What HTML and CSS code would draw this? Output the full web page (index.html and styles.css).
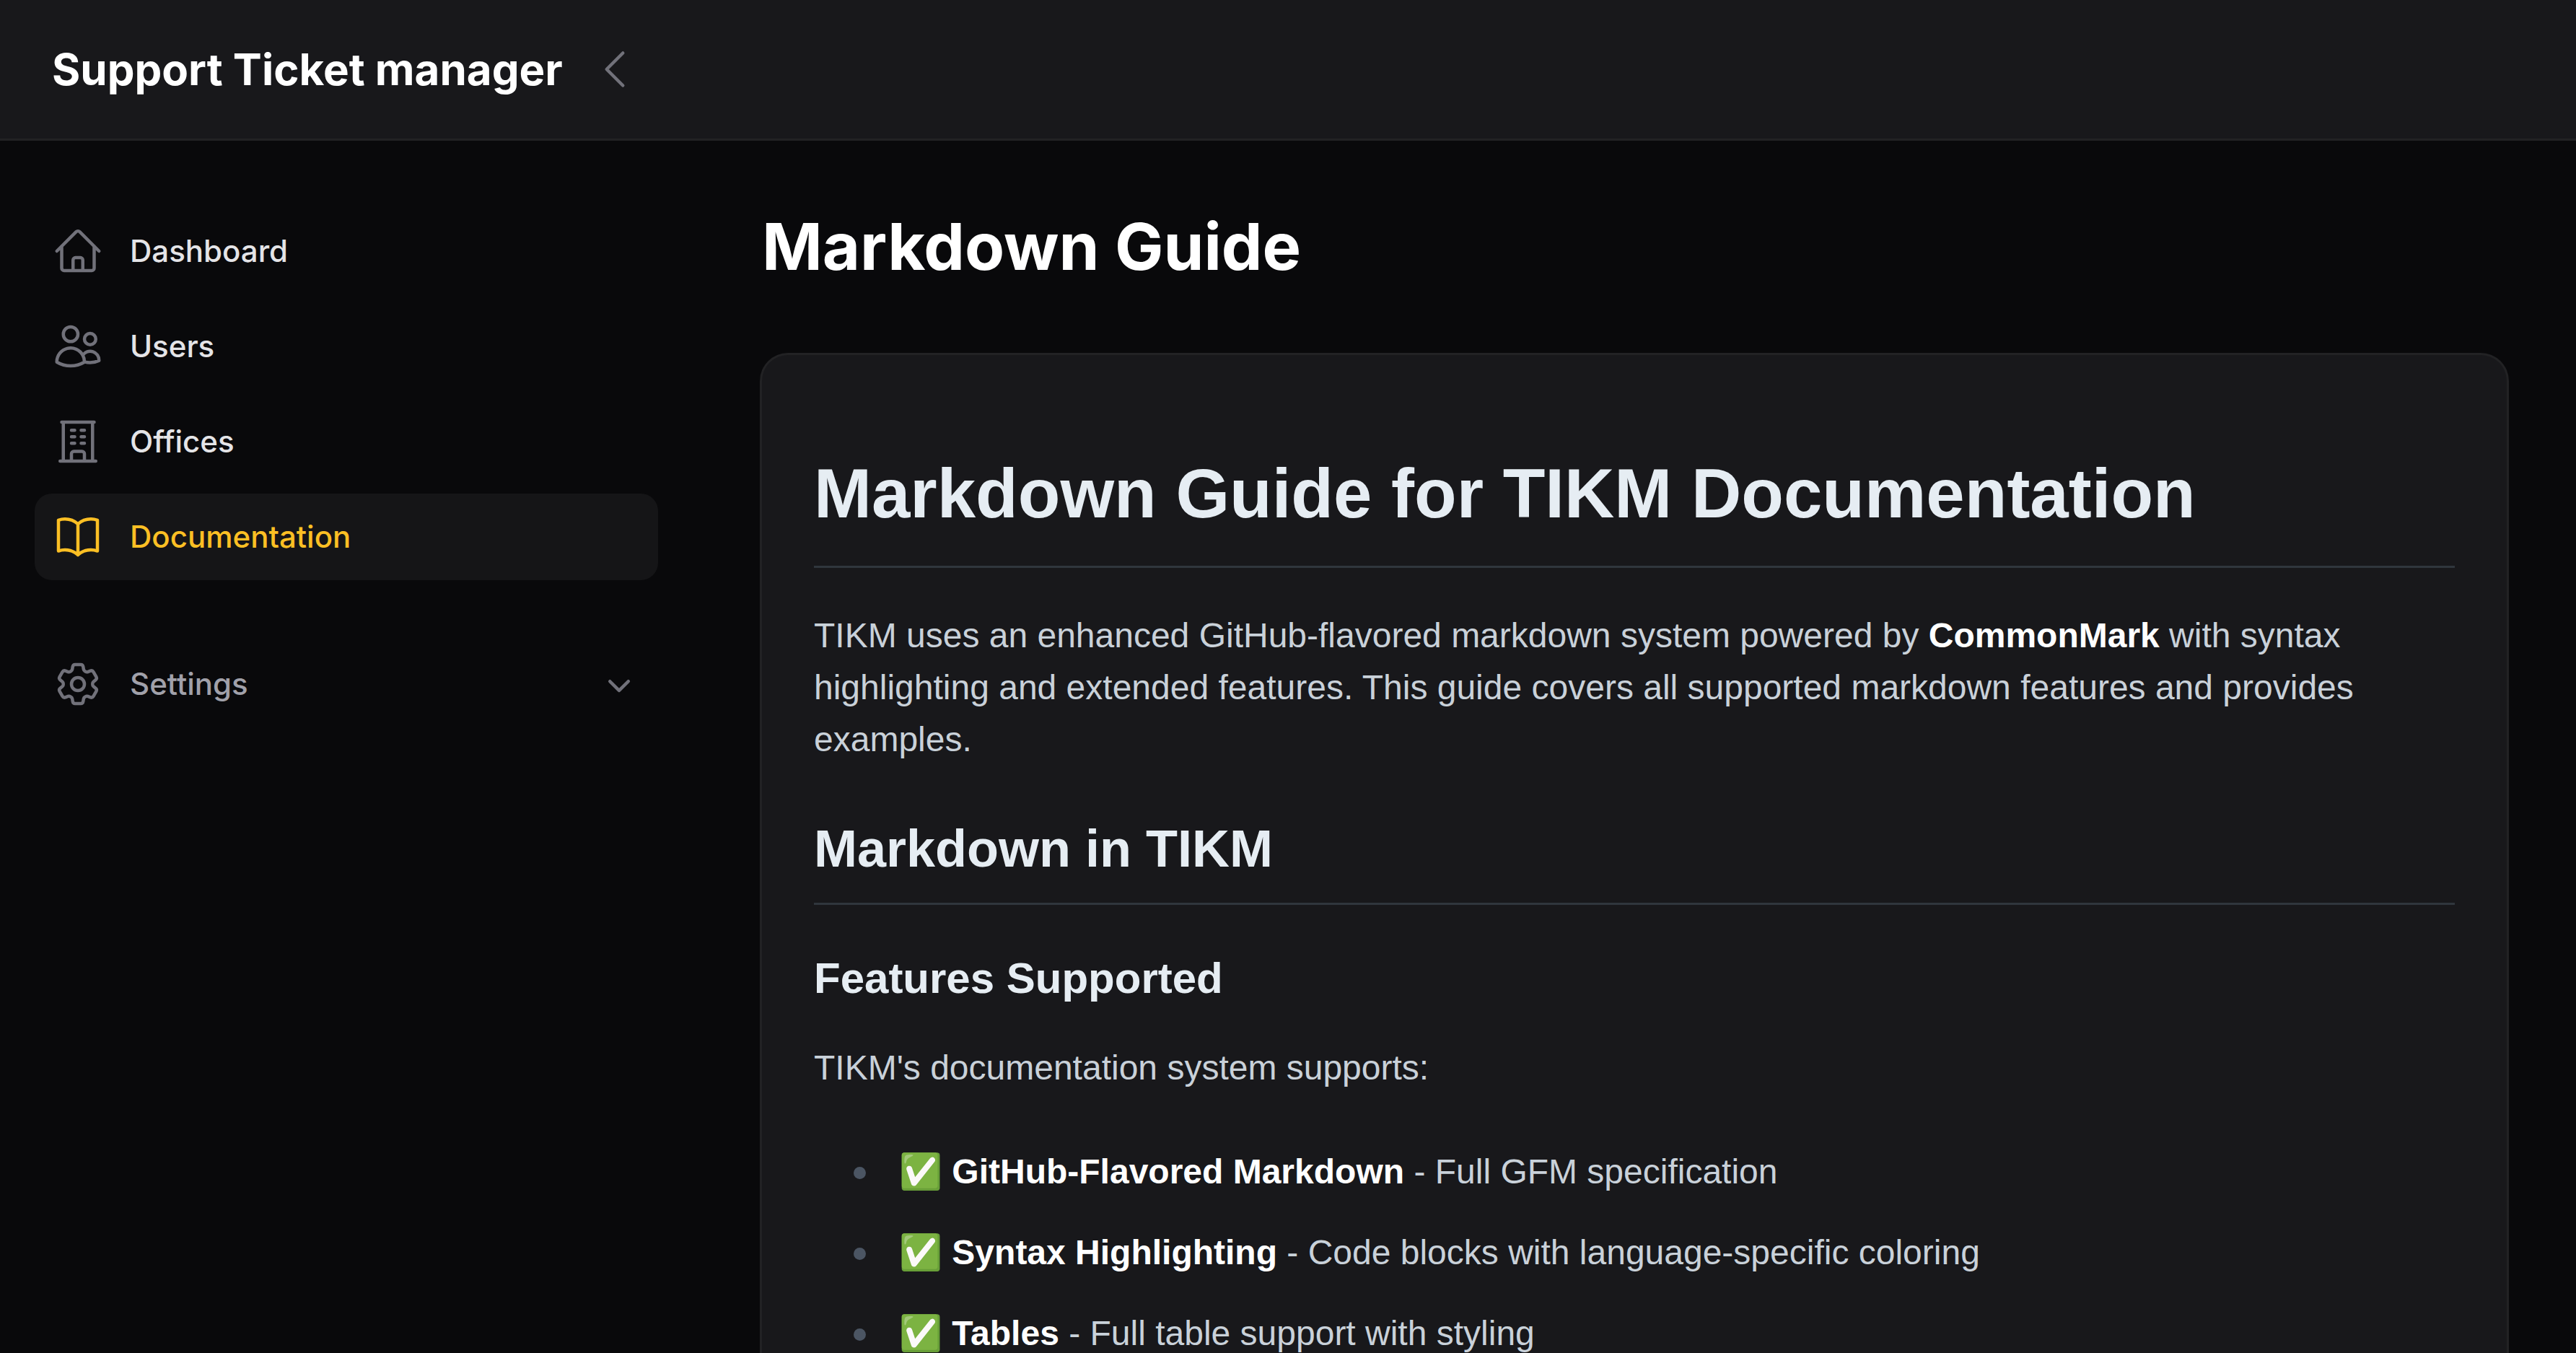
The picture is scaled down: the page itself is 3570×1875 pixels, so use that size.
FILE: index.html
```html
<!DOCTYPE html>
<html lang="en">
<head>
<meta charset="utf-8">
<meta name="viewport" content="width=device-width, initial-scale=1">
<title>Markdown Guide - Support Ticket manager</title>
<link rel="stylesheet" href="styles.css">
</head>
<body>
<div class="app">
  <header class="topbar">
    <div class="topbar-brand">
      <a class="brand" href="#">Support Ticket manager</a>
      <button class="icon-button" type="button" aria-label="Collapse sidebar">
        <svg class="icon" viewBox="0 0 24 24" aria-hidden="true"><path d="M15.75 19.5 8.25 12l7.5-7.5"/></svg>
      </button>
    </div>
  </header>
  <div class="layout">
    <nav class="sidebar" aria-label="Main">
      <ul class="nav-list">
        <li><a class="nav-item" href="#">
          <svg class="icon" viewBox="0 0 24 24" aria-hidden="true"><path d="m2.25 12 8.954-8.955c.44-.439 1.152-.439 1.591 0L21.75 12M4.5 9.75v10.125c0 .621.504 1.125 1.125 1.125H9.75v-4.875c0-.621.504-1.125 1.125-1.125h2.25c.621 0 1.125.504 1.125 1.125V21h4.125c.621 0 1.125-.504 1.125-1.125V9.75M8.25 21h8.25"/></svg>
          <span>Dashboard</span></a></li>
        <li><a class="nav-item" href="#">
          <svg class="icon" viewBox="0 0 24 24" aria-hidden="true"><path d="M15 19.128a9.38 9.38 0 0 0 2.625.372 9.337 9.337 0 0 0 4.121-.952 4.125 4.125 0 0 0-7.533-2.493M15 19.128v-.003c0-1.113-.285-2.16-.786-3.07M15 19.128v.106A12.318 12.318 0 0 1 8.624 21c-2.331 0-4.512-.645-6.374-1.766l-.001-.109a6.375 6.375 0 0 1 11.964-3.07M12 6.375a3.375 3.375 0 1 1-6.75 0 3.375 3.375 0 0 1 6.75 0Zm8.25 2.25a2.625 2.625 0 1 1-5.25 0 2.625 2.625 0 0 1 5.25 0Z"/></svg>
          <span>Users</span></a></li>
        <li><a class="nav-item" href="#">
          <svg class="icon" viewBox="0 0 24 24" aria-hidden="true"><path d="M3.75 21h16.5M4.5 3h15M5.25 3v18m13.5-18v18M9 6.75h1.5m-1.5 3h1.5m-1.5 3h1.5m3-6H15m-1.5 3H15m-1.5 3H15M9 21v-3.375c0-.621.504-1.125 1.125-1.125h3.75c.621 0 1.125.504 1.125 1.125V21"/></svg>
          <span>Offices</span></a></li>
        <li><a class="nav-item nav-item-active" href="#" aria-current="page">
          <svg class="icon" viewBox="0 0 24 24" aria-hidden="true"><path d="M12 6.042A8.967 8.967 0 0 0 6 3.75c-1.052 0-2.062.18-3 .512v14.25A8.987 8.987 0 0 1 6 18c2.305 0 4.408.867 6 2.292m0-14.25a8.966 8.966 0 0 1 6-2.292c1.052 0 2.062.18 3 .512v14.25A8.987 8.987 0 0 0 18 18a8.967 8.967 0 0 0-6 2.292m0-14.25v14.25"/></svg>
          <span>Documentation</span></a></li>
      </ul>
      <button class="nav-item nav-group" type="button" aria-expanded="false">
        <svg class="icon" viewBox="0 0 24 24" aria-hidden="true"><path d="M9.594 3.94c.09-.542.56-.94 1.11-.94h2.593c.55 0 1.02.398 1.11.94l.213 1.281c.063.374.313.686.645.87.074.04.147.083.22.127.325.196.72.257 1.075.124l1.217-.456a1.125 1.125 0 0 1 1.37.49l1.296 2.247a1.125 1.125 0 0 1-.26 1.431l-1.003.827c-.293.241-.438.613-.43.992a7.723 7.723 0 0 1 0 .255c-.008.378.137.75.43.991l1.004.827c.424.35.534.955.26 1.43l-1.298 2.247a1.125 1.125 0 0 1-1.369.491l-1.217-.456c-.355-.133-.75-.072-1.076.124a6.47 6.47 0 0 1-.22.128c-.331.183-.581.495-.644.869l-.213 1.281c-.09.543-.56.94-1.11.94h-2.594c-.55 0-1.019-.398-1.11-.94l-.213-1.281c-.062-.374-.312-.686-.644-.87a6.52 6.52 0 0 1-.22-.127c-.325-.196-.72-.257-1.076-.124l-1.217.456a1.125 1.125 0 0 1-1.369-.49l-1.297-2.247a1.125 1.125 0 0 1 .26-1.431l1.004-.827c.292-.24.437-.613.43-.991a6.932 6.932 0 0 1 0-.255c.007-.38-.138-.751-.43-.992l-1.004-.827a1.125 1.125 0 0 1-.26-1.43l1.297-2.247a1.125 1.125 0 0 1 1.37-.491l1.216.456c.356.133.751.072 1.076-.124.072-.044.146-.086.22-.128.332-.183.582-.495.644-.869l.214-1.28Z"/><path d="M15 12a3 3 0 1 1-6 0 3 3 0 0 1 6 0Z"/></svg>
        <span class="nav-label">Settings</span>
        <svg class="icon-solid" viewBox="0 0 20 20" aria-hidden="true"><path fill-rule="evenodd" d="M5.22 8.22a.75.75 0 0 1 1.06 0L10 11.94l3.72-3.72a.75.75 0 1 1 1.06 1.06l-4.25 4.25a.75.75 0 0 1-1.06 0L5.22 9.28a.75.75 0 0 1 0-1.06Z" clip-rule="evenodd"/></svg>
      </button>
    </nav>
    <main class="content">
      <h1 class="page-title">Markdown Guide</h1>
      <article class="card markdown">
        <h2 class="md-title">Markdown Guide for TIKM Documentation</h2>
        <p class="md-text">TIKM uses an enhanced GitHub-flavored markdown system powered by <strong>CommonMark</strong> with syntax highlighting and extended features. This guide covers all supported markdown features and provides examples.</p>
        <h3 class="md-section">Markdown in TIKM</h3>
        <h4 class="md-subsection">Features Supported</h4>
        <p class="md-text">TIKM's documentation system supports:</p>
        <ul class="md-list">
          <li>✅ <strong>GitHub-Flavored Markdown</strong> - Full GFM specification</li>
          <li>✅ <strong>Syntax Highlighting</strong> - Code blocks with language-specific coloring</li>
          <li>✅ <strong>Tables</strong> - Full table support with styling</li>
        </ul>
      </article>
    </main>
  </div>
</div>
</body>
</html>
```
FILE: styles.css
```css
*, *::before, *::after { box-sizing: border-box; }

body {
  margin: 0;
  background: #09090b;
  color: #fff;
  font-family: Inter, "Liberation Sans", sans-serif;
}

h1, h2, h3, h4, p, ul { margin: 0; }
ul { padding: 0; list-style: none; }
a { color: inherit; text-decoration: none; }
button { border: 0; background: none; color: inherit; font: inherit; cursor: pointer; }

.app {
  display: flex;
  flex-direction: column;
  height: 100vh;
  overflow: hidden;
}

.topbar {
  position: relative;
  flex: none;
  display: flex;
  height: 192px;
  background: #18181b;
  box-shadow: 0 0 0 3px #222224;
}

.topbar-brand {
  display: flex;
  align-items: center;
  justify-content: space-between;
  width: 960px;
  padding: 0 72px;
}

.brand { font-size: 60px; font-weight: 700; line-height: 60px; }

.icon-button { display: flex; padding: 0; color: #71717a; }

.icon {
  flex: none;
  width: 72px;
  height: 72px;
  fill: none;
  stroke: #71717a;
  stroke-width: 1.5;
  stroke-linecap: round;
  stroke-linejoin: round;
}

.icon-solid { flex: none; width: 60px; height: 60px; fill: #71717a; }

.layout { flex: 1; display: flex; align-items: flex-start; min-height: 0; }

.sidebar {
  flex: none;
  display: flex;
  flex-direction: column;
  gap: 84px;
  width: 960px;
  padding: 96px 48px;
}

.nav-list { display: flex; flex-direction: column; gap: 12px; }

.nav-item {
  display: flex;
  align-items: center;
  gap: 36px;
  width: 100%;
  padding: 24px;
  border-radius: 24px;
  color: #e4e4e7;
  font-size: 42px;
  font-weight: 500;
  line-height: 72px;
}

.nav-item-active { background: #151517; color: #fbbf24; }
.nav-item-active .icon { stroke: #fbbf24; }

.nav-group { color: #a1a1aa; text-align: left; }
.nav-label { flex: 1; }

.content {
  flex: 1;
  display: flex;
  flex-direction: column;
  gap: 96px;
  min-width: 0;
  padding: 96px;
}

.page-title { font-size: 90px; font-weight: 700; line-height: 108px; }

.card {
  padding: 72px;
  border-radius: 36px;
  background: #18181b;
  box-shadow: 0 0 0 3px #222224;
}

.markdown {
  color: #c9d1d9;
  font-family: "Liberation Sans", Arial, sans-serif;
  font-size: 48px;
  line-height: 72px;
}

.markdown strong { color: #fff; font-weight: 700; }

.md-title, .md-section, .md-subsection { color: #e6edf3; font-weight: 700; }

.md-title {
  padding: 60px 0 40px;
  border-bottom: 3px solid #30363d;
  font-size: 96px;
  line-height: 120px;
}

.md-section {
  margin-top: 70px;
  padding-bottom: 30px;
  border-bottom: 3px solid #30363d;
  font-size: 72px;
  line-height: 90px;
}

.md-subsection { margin-top: 72px; font-size: 60px; line-height: 60px; }

.md-text { margin-top: 58px; }

.md-list {
  display: flex;
  flex-direction: column;
  gap: 40px;
  margin-top: 72px;
  padding-left: 54px;
}

.md-list li { position: relative; padding-left: 64px; }

.md-list li::before {
  content: "";
  position: absolute;
  top: 29px;
  left: 1px;
  width: 17px;
  height: 17px;
  border-radius: 50%;
  background: #4b5563;
}
```
